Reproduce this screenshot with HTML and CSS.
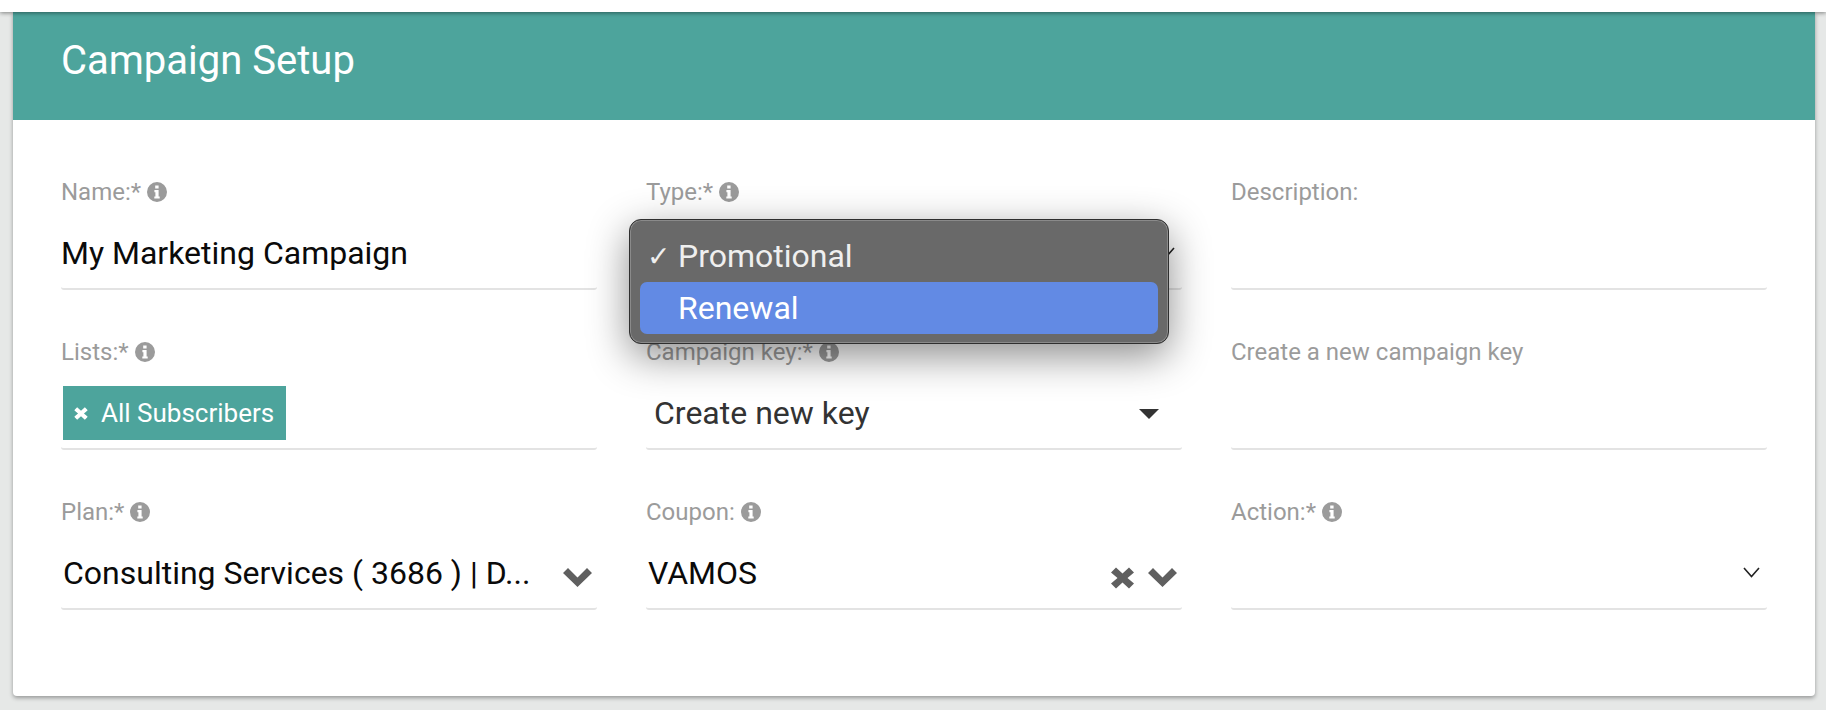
FILE: index.html
```html
<!DOCTYPE html>
<html lang="en">
<head>
    <meta charset="UTF-8">
    <title>Campaign Setup</title>
    <link rel="stylesheet" href="styles.css">
</head>
<body>

    <svg class="icon-defs" width="0" height="0">
        <defs>
            <symbol id="info" viewBox="0 0 20 20">
                <path fill-rule="evenodd" d="M10 0a10 10 0 1 0 0 20a10 10 0 0 0 0-20zM8.2 3.4h3.4v3h-3.4zM7.4 8h4.2v6.4h1.1v2.2H7.3v-2.2h1.1v-4.2h-1z"/>
            </symbol>
            <symbol id="chevron" viewBox="0 0 29 19">
                <path d="M0 5L5 0L14.5 9.5L24 0L29 5L14.5 19z"/>
            </symbol>
            <symbol id="cross" viewBox="0 0 23 22">
                <path d="M5 0.5L11.5 6.5L18 0.5L23 5.5L16.5 11L23 16.5L18 21.5L11.5 15.5L5 21.5L0 16.5L6.5 11L0 5.5z"/>
            </symbol>
        </defs>
    </svg>

    <div class="topbar"></div>

    <div class="card">
        <div class="card-header">Campaign Setup</div>

        <div class="form-grid">
            <div class="field">
                <label>Name:* <svg class="info"><use href="#info"/></svg></label>
                <div class="control"><span class="value">My Marketing Campaign</span></div>
            </div>

            <div class="field field-type">
                <label>Type:* <svg class="info"><use href="#info"/></svg></label>
                <div class="control">
                    <svg class="thin-chevron" viewBox="0 0 17 11"><path d="M1 1l7.5 8.5L16 1"/></svg>
                </div>

                <div class="native-menu">
                    <div class="menu-item"><span class="check">✓</span>Promotional</div>
                    <div class="menu-item active">Renewal</div>
                </div>
            </div>

            <div class="field">
                <label>Description:</label>
                <div class="control"></div>
            </div>

            <div class="field">
                <label>Lists:* <svg class="info"><use href="#info"/></svg></label>
                <div class="control control-chip">
                    <span class="chip"><svg class="chip-x" viewBox="0 0 23 22"><use href="#cross"/></svg>All Subscribers</span>
                </div>
            </div>

            <div class="field">
                <label>Campaign key:* <svg class="info"><use href="#info"/></svg></label>
                <div class="control control-key">
                    <span class="value value-dark">Create new key</span>
                    <span class="caret"></span>
                </div>
            </div>

            <div class="field">
                <label>Create a new campaign key</label>
                <div class="control"></div>
            </div>

            <div class="field">
                <label>Plan:* <svg class="info"><use href="#info"/></svg></label>
                <div class="control control-plan">
                    <span class="value value-plan">Consulting Services ( 3686 ) | D...</span>
                    <svg class="heavy-chevron"><use href="#chevron"/></svg>
                </div>
            </div>

            <div class="field">
                <label>Coupon: <svg class="info"><use href="#info"/></svg></label>
                <div class="control control-coupon">
                    <span class="value value-coupon">VAMOS</span>
                    <svg class="heavy-cross"><use href="#cross"/></svg>
                    <svg class="heavy-chevron"><use href="#chevron"/></svg>
                </div>
            </div>

            <div class="field">
                <label>Action:* <svg class="info"><use href="#info"/></svg></label>
                <div class="control">
                    <svg class="thin-chevron" viewBox="0 0 17 11"><path d="M1 1l7.5 8.5L16 1"/></svg>
                </div>
            </div>
        </div>
    </div>

</body>
</html>
```

FILE: styles.css
```css
:root {
    --teal: #4da49c;
    --page: #e6e8e7;
    --label: #9b9b9b;
    --line: #e3e3e3;
    --icon: #5f5f5f;
}

body {
    margin: 0;
    height: 710px;
    overflow: hidden;
    font-family: Roboto, Arial, sans-serif;
    background-color: var(--page);
}

.icon-defs {
    position: absolute;
}

.topbar {
    position: relative;
    z-index: 2;
    height: 12px;
    background-color: #fff;
    box-shadow: 0 1px 4px rgba(0, 0, 0, 0.45);
}

.card {
    height: 684px;
    margin: 0 11px 0 13px;
    background-color: #fff;
    border-radius: 0 0 4px 4px;
    box-shadow: 0 2px 4px rgba(0, 0, 0, 0.35);
}

.card-header {
    height: 108px;
    padding-left: 48px;
    line-height: 97px;
    font-size: 40px;
    color: #fff;
    background-color: var(--teal);
}

.form-grid {
    display: grid;
    grid-template-columns: repeat(3, 536px);
    column-gap: 49px;
    row-gap: 47px;
    padding: 57px 48px 0;
}

.field {
    position: relative;
}

.field label {
    display: flex;
    align-items: center;
    gap: 6px;
    height: 30px;
    font-size: 24px;
    color: var(--label);
}

.info {
    width: 20px;
    height: 20px;
    fill: var(--label);
}

.control {
    display: flex;
    align-items: center;
    box-sizing: border-box;
    height: 83px;
    padding-top: 20px;
    border-bottom: 2px solid var(--line);
    border-radius: 0 0 3px 3px;
}

.value {
    margin-bottom: 10px;
    font-size: 32px;
    color: #0a0a0a;
}

.value-dark {
    color: #333;
}

.thin-chevron {
    width: 17px;
    height: 11px;
    margin: 0 7px 10px auto;
    fill: none;
    stroke: #222;
    stroke-width: 1.6;
}

.control-chip {
    padding-top: 19px;
    padding-left: 2px;
    align-items: flex-start;
}

.chip {
    display: flex;
    align-items: center;
    height: 54px;
    padding: 0 12px 0 11px;
    font-size: 26px;
    color: #fff;
    background-color: var(--teal);
}

.chip-x {
    width: 14px;
    height: 13px;
    margin-right: 13px;
    fill: #fff;
}

.control-key {
    padding-left: 8px;
    padding-right: 23px;
    justify-content: space-between;
}

.caret {
    width: 0;
    height: 0;
    margin-bottom: 8px;
    border-left: 10px solid transparent;
    border-right: 10px solid transparent;
    border-top: 10px solid #333;
}

.control-plan {
    padding-left: 2px;
    padding-right: 5px;
    justify-content: space-between;
}

.control-coupon {
    padding-left: 2px;
    padding-right: 5px;
}

.value-coupon {
    margin-right: auto;
}

.heavy-chevron {
    width: 29px;
    height: 19px;
    fill: var(--icon);
}

.heavy-cross {
    width: 23px;
    height: 22px;
    margin-right: 14px;
    fill: var(--icon);
}

/* native select popup, sits over the form */
.native-menu {
    position: absolute;
    top: 42px;
    left: -17px;
    width: 540px;
    height: 125px;
    padding: 10px 10px;
    box-sizing: border-box;
    background-color: #696969;
    border: 1px solid #2f2f2f;
    border-radius: 12px;
    box-shadow: inset 0 0 0 1px #8a8a8a, 0 12px 40px rgba(0, 0, 0, 0.45);
    z-index: 3;
}

.menu-item {
    display: flex;
    align-items: center;
    height: 52px;
    padding-left: 38px;
    position: relative;
    font-size: 32px;
    color: #efefef;
    border-radius: 7px;
}

.menu-item.active {
    color: #fff;
    background-color: #628ae4;
}

.check {
    position: absolute;
    left: 7px;
    font-size: 28px;
    font-family: "DejaVu Sans", sans-serif;
}
```
